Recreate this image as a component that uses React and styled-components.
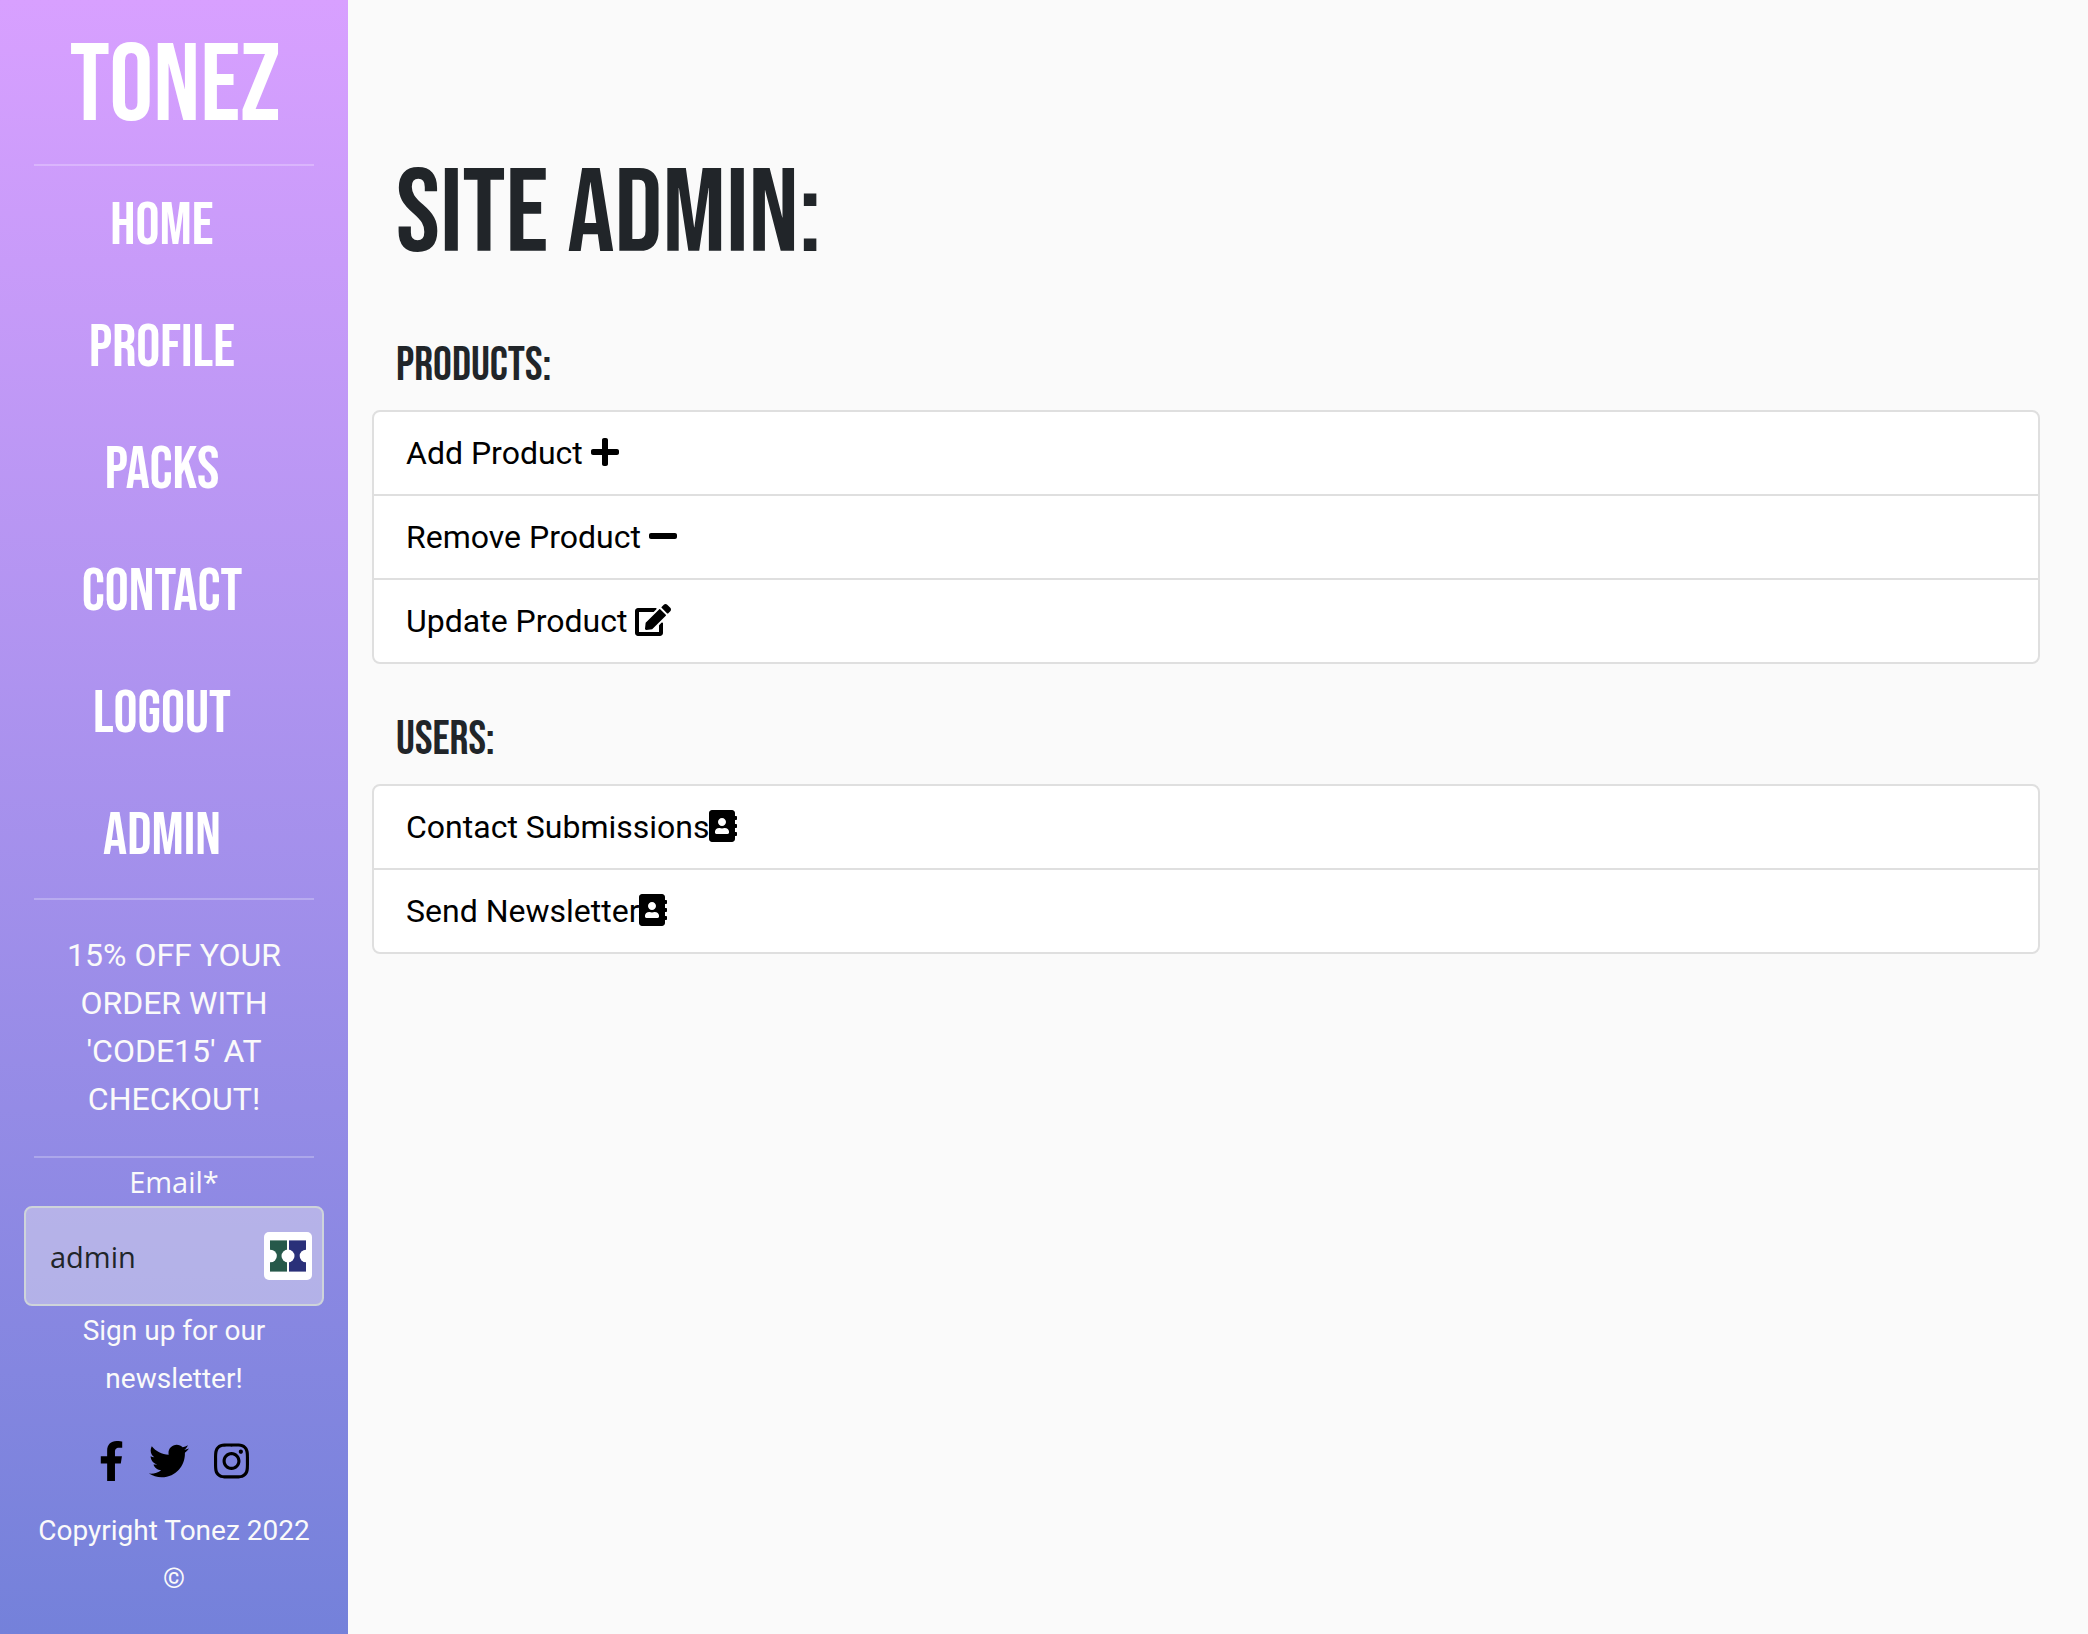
import React from "react";
import styled, { createGlobalStyle } from "styled-components";
import {
  FaPlus,
  FaMinus,
  FaEdit,
  FaAddressBook,
  FaFacebookF,
  FaTwitter,
  FaInstagram,
} from "react-icons/fa";

const display = `"Bebas Neue", "Roboto Condensed", "Liberation Sans", sans-serif`;
const body = `Roboto, "Liberation Sans", sans-serif`;
const form = `"Segoe UI", "Open Sans", "Noto Sans", sans-serif`;

const GlobalStyle = createGlobalStyle`
  *, *::before, *::after { box-sizing: border-box; }
  body {
    margin: 0;
    background: #fafafa;
    color: #212529;
    font: 400 32px/48px ${body};
  }
  h1, h2, p, ul { margin: 0; padding: 0; }
  ul { list-style: none; }
`;

const Page = styled.div`
  display: flex;
  min-height: 100vh;
`;

const Sidebar = styled.aside`
  display: flex;
  flex: 0 0 348px;
  min-width: 0;
  flex-direction: column;
  padding: 0 24px 32px;
  background: linear-gradient(#d8a0ff, #7481da);
  color: #fafafa;
  text-align: center;
`;

const Logo = styled.a`
  padding: 21px 0 11px 2px;
  color: #fff;
  font: 400 110px/132px ${display};
  text-decoration: none;
`;

const Divider = styled.hr`
  width: 280px;
  height: 2px;
  margin: 0 auto;
  border: 0;
  background: rgba(255, 255, 255, 0.25);
`;

const NavLink = styled.a`
  display: block;
  padding: 0 24px 2px 0;
  color: #fff;
  font: 400 60px/120px ${display};
  text-decoration: none;
`;

const Promo = styled.p`
  padding: 31px 32px 33px;
`;

const Signup = styled.form`
  display: flex;
  flex-direction: column;
`;

const EmailLabel = styled.label`
  font: 400 29px/48px ${form};
`;

const Field = styled.div`
  position: relative;
`;

const EmailInput = styled.input`
  display: block;
  width: 100%;
  height: 100px;
  padding: 0 64px 0 24px;
  border: 2px solid #ced4da;
  border-radius: 8px;
  outline: 0;
  background: rgba(222, 220, 238, 0.5);
  color: #212529;
  font: 400 29px/48px ${form};
`;

const Autofill = styled.button`
  position: absolute;
  top: 26px;
  right: 12px;
  width: 48px;
  height: 48px;
  padding: 0;
  border: 0;
  border-radius: 5px;
  background: #fff;
`;

const Small = styled.p`
  padding: 1px 24px 0;
  font-size: 28px;
`;

const Copyright = styled.p`
  padding-top: 1px;
  font-size: 28px;
`;

const Social = styled.div`
  display: flex;
  justify-content: center;
  gap: 25px;
  padding: 38px 0 25px;
  font-size: 40px;
`;

const SocialLink = styled.a`
  display: flex;
  color: #000;

  svg {
    width: ${(p) => p.$iconWidth}px;
  }
`;

const Main = styled.main`
  flex: 1;
  min-width: 0;
  padding: 144px 48px 48px 24px;
`;

const Title = styled.h1`
  padding: 0 24px 48px;
  font: 500 118px/144px ${display};
`;

const SectionTitle = styled.h2`
  padding: 1px 24px 15px;
  font: 500 47px/58px ${display};
`;

const Group = styled.ul`
  margin-bottom: 46px;
  border: 2px solid #dfdfdf;
  border-radius: 8px;
  background: #fff;
`;

const Item = styled.li`
  & + & {
    border-top: 2px solid #dfdfdf;
  }
`;

const ItemLink = styled.a`
  display: block;
  padding: 17px 32px;
  color: #000;
  text-decoration: none;

  svg {
    width: ${(p) => p.$iconWidth}px;
    vertical-align: -4px;
  }
`;

const nav = ["HOME", "PROFILE", "PACKS", "CONTACT", "LOGOUT", "ADMIN"];

const sections = [
  {
    title: "PRODUCTS:",
    items: [
      { label: "Add Product ", Icon: FaPlus, iconWidth: 28 },
      { label: "Remove Product ", Icon: FaMinus, iconWidth: 28 },
      { label: "Update Product ", Icon: FaEdit, iconWidth: 36 },
    ],
  },
  {
    title: "USERS:",
    items: [
      { label: "Contact Submissions", Icon: FaAddressBook, iconWidth: 28 },
      { label: "Send Newsletter", Icon: FaAddressBook, iconWidth: 28 },
    ],
  },
];

const social = [
  { name: "Facebook", Icon: FaFacebookF, iconWidth: 25 },
  { name: "Twitter", Icon: FaTwitter, iconWidth: 40 },
  { name: "Instagram", Icon: FaInstagram, iconWidth: 35 },
];

function PuzzleIcon() {
  return (
    <svg width="48" height="48" viewBox="0 0 48 48" aria-hidden="true">
      <path d="M6 8h17v32H6z" fill="#26594a" />
      <path d="M25 8h17v32H25z" fill="#2a3079" />
      <path d="M6 8h17v1H6zM6 39h17v1H6zM25 8h17v1H25zM25 39h17v1H25z" fill="#fff" opacity=".4" />
      <g fill="#fff">
        <circle cx="6.500" cy="24" r="6.300" />
        <circle cx="24" cy="24" r="6.500" />
        <circle cx="42" cy="24" r="6.300" />
      </g>
    </svg>
  );
}

export default function App() {
  return (
    <Page>
      <GlobalStyle />
      <Sidebar>
        <Logo href="#home">TONEZ</Logo>
        <Divider />
        <nav>
          <ul>
            {nav.map((label) => (
              <li key={label}>
                <NavLink href={`#${label.toLowerCase()}`}>{label}</NavLink>
              </li>
            ))}
          </ul>
        </nav>
        <Divider />
        <Promo>15% OFF YOUR ORDER WITH 'CODE15' AT CHECKOUT!</Promo>
        <Divider />
        <Signup>
          <EmailLabel htmlFor="email">Email*</EmailLabel>
          <Field>
            <EmailInput id="email" type="text" defaultValue="admin" />
            <Autofill type="button" aria-label="Fill in email">
              <PuzzleIcon />
            </Autofill>
          </Field>
          <Small>Sign up for our newsletter!</Small>
        </Signup>
        <Social>
          {social.map(({ name, Icon, iconWidth }) => (
            <SocialLink
              key={name}
              href={`#${name.toLowerCase()}`}
              aria-label={name}
              $iconWidth={iconWidth}
            >
              <Icon />
            </SocialLink>
          ))}
        </Social>
        <Copyright>Copyright Tonez 2022 ©</Copyright>
      </Sidebar>
      <Main>
        <Title>SITE ADMIN:</Title>
        {sections.map(({ title, items }) => (
          <section key={title}>
            <SectionTitle>{title}</SectionTitle>
            <Group>
              {items.map(({ label, Icon, iconWidth }) => (
                <Item key={label}>
                  <ItemLink href="#admin" $iconWidth={iconWidth}>
                    {label}
                    <Icon />
                  </ItemLink>
                </Item>
              ))}
            </Group>
          </section>
        ))}
      </Main>
    </Page>
  );
}
